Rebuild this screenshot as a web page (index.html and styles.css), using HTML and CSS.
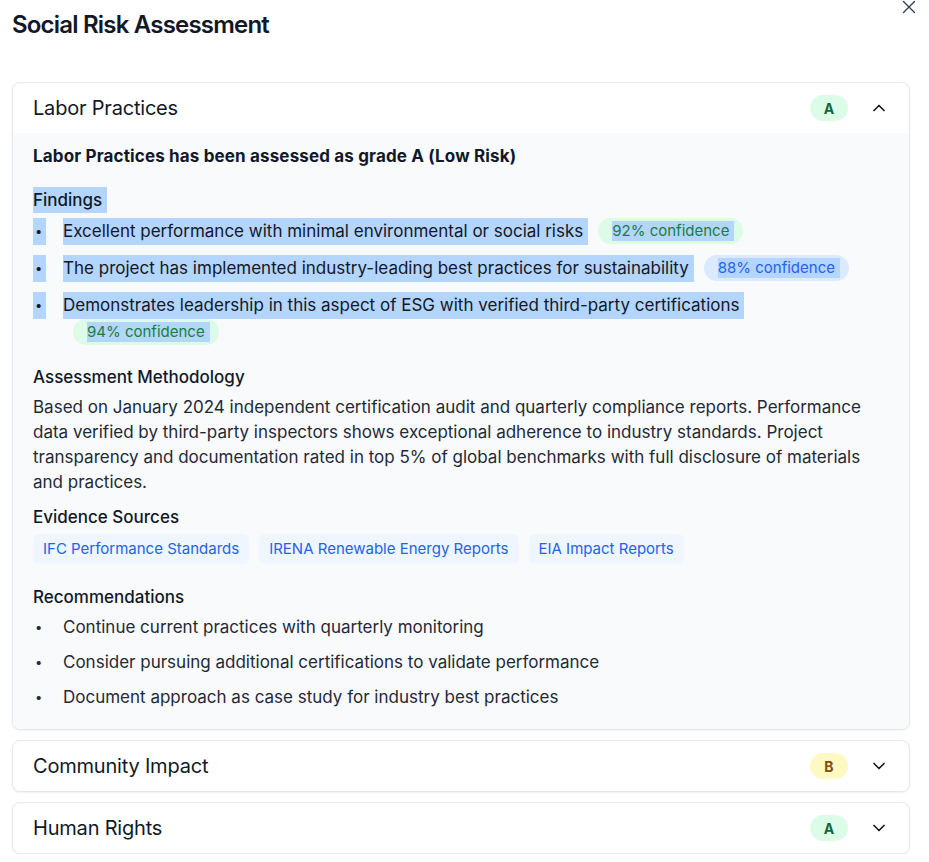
FILE: index.html
```html
<!DOCTYPE html>
<html lang="en">
<head>
<meta charset="utf-8">
<title>Social Risk Assessment</title>
<link rel="stylesheet" href="styles.css">
</head>
<body>
<div class="dialog">
  <button class="close" aria-label="Close">
    <svg width="14" height="14" viewBox="0 0 14 14" fill="none" stroke="#374151" stroke-width="1.4" stroke-linecap="round"><path d="M1.5 1.5l11 11M12.5 1.5l-11 11"/></svg>
  </button>
  <h2 class="title">Social Risk Assessment</h2>

  <div class="accordion">
    <section class="card">
      <div class="card-head">
        <span class="card-title">Labor Practices</span>
        <span class="grade grade-a">A</span>
        <svg class="chev" width="20" height="20" viewBox="0 0 24 24" fill="none" stroke="#111827" stroke-width="2" stroke-linecap="round" stroke-linejoin="round"><path d="m18 15-6-6-6 6"/></svg>
      </div>
      <div class="card-body">
        <p class="summary">Labor Practices has been assessed as grade A (Low Risk)</p>

        <h3 class="label findings-label"><span class="sel sel-label">Findings</span></h3>
        <ul class="findings">
          <li class="finding">
            <span class="bullet sel">•</span>
            <span class="finding-text"><span class="sel sel-text">Excellent performance with minimal environmental or social risks</span><span class="conf conf-green"><span class="sel sel-conf">92% confidence</span></span></span>
          </li>
          <li class="finding">
            <span class="bullet sel">•</span>
            <span class="finding-text"><span class="sel sel-text">The project has implemented industry-leading best practices for sustainability</span><span class="conf conf-blue"><span class="sel sel-conf">88% confidence</span></span></span>
          </li>
          <li class="finding">
            <span class="bullet sel">•</span>
            <span class="finding-text"><span class="sel sel-text">Demonstrates leadership in this aspect of ESG with verified third-party certifications</span><span class="conf conf-green"><span class="sel sel-conf">94% confidence</span></span></span>
          </li>
        </ul>

        <h3 class="label method-label">Assessment Methodology</h3>
        <p class="method">Based on January 2024 independent certification audit and quarterly compliance reports. Performance data verified by third-party inspectors shows exceptional adherence to industry standards. Project transparency and documentation rated in top 5% of global benchmarks with full disclosure of materials and practices.</p>

        <h3 class="label evidence-label">Evidence Sources</h3>
        <div class="chips">
          <span class="chip">IFC Performance Standards</span>
          <span class="chip">IRENA Renewable Energy Reports</span>
          <span class="chip">EIA Impact Reports</span>
        </div>

        <h3 class="label rec-label">Recommendations</h3>
        <ul class="recs">
          <li class="rec"><span class="bullet">•</span><span>Continue current practices with quarterly monitoring</span></li>
          <li class="rec"><span class="bullet">•</span><span>Consider pursuing additional certifications to validate performance</span></li>
          <li class="rec"><span class="bullet">•</span><span>Document approach as case study for industry best practices</span></li>
        </ul>
      </div>
    </section>

    <section class="card">
      <div class="card-head">
        <span class="card-title">Community Impact</span>
        <span class="grade grade-b">B</span>
        <svg class="chev" width="20" height="20" viewBox="0 0 24 24" fill="none" stroke="#111827" stroke-width="2" stroke-linecap="round" stroke-linejoin="round"><path d="m6 9 6 6 6-6"/></svg>
      </div>
    </section>

    <section class="card">
      <div class="card-head">
        <span class="card-title">Human Rights</span>
        <span class="grade grade-a">A</span>
        <svg class="chev" width="20" height="20" viewBox="0 0 24 24" fill="none" stroke="#111827" stroke-width="2" stroke-linecap="round" stroke-linejoin="round"><path d="m6 9 6 6 6-6"/></svg>
      </div>
    </section>
  </div>
</div>
</body>
</html>
```

FILE: styles.css
```css
* { box-sizing: border-box; }

body {
  margin: 0;
  background: #ffffff;
  color: #111827;
  font-family: Inter, "Noto Sans", "Liberation Sans", sans-serif;
}

.dialog {
  position: relative;
  padding: 9px 19px 0 12px;
}

.close {
  position: absolute;
  top: 0;
  left: 902px;
  padding: 0;
  border: 0;
  background: none;
  line-height: 0;
}

.title {
  margin: 0 0 41px;
  font-size: 24px;
  line-height: 32px;
  font-weight: 600;
  letter-spacing: -0.8px;
}

.card {
  border: 1px solid #e5e7eb;
  border-radius: 8px;
  overflow: hidden;
  background: #ffffff;
  box-shadow: 0 1px 2px rgba(0, 0, 0, 0.05);
}

.card + .card {
  margin-top: 10px;
}

.card-head {
  display: flex;
  align-items: center;
  height: 50px;
  padding: 0 20px 0 20px;
}

.card-title {
  flex: 1;
  font-size: 20px;
  line-height: 28px;
  letter-spacing: -0.2px;
}

.grade {
  display: flex;
  align-items: center;
  justify-content: center;
  width: 38px;
  height: 26px;
  border-radius: 13px;
  font-size: 14px;
  font-weight: 700;
}

.grade-a { background: #dcfce7; color: #166534; }
.grade-b { background: #fef9c3; color: #854d0e; }

.chev {
  margin-left: 21px;
}

.card-body {
  background: #f9fafb;
  padding: 11px 20px 20px;
}

.summary {
  margin: 0;
  font-size: 17px;
  line-height: 24px;
  font-weight: 700;
  letter-spacing: 0.15px;
}

.label {
  margin: 0;
  font-size: 17px;
  line-height: 24px;
  font-weight: 500;
}

.sel {
  background: #b4d5fe;
}

.findings-label { margin-top: 20px; }
.sel-label { padding: 3px 5px 3px 0; }

.findings,
.recs {
  list-style: none;
  margin: 0;
  padding: 0;
}

.findings { margin-top: 6px; }

.finding {
  display: flex;
  gap: 17px;
  font-size: 17px;
  line-height: 27px;
  margin-bottom: 10px;
}

.finding:last-child { margin-bottom: 0; }

.bullet {
  flex: none;
  display: inline-block;
  width: 13px;
  padding-left: 2px;
  font-size: 13px;
}

.finding .bullet { height: 27px; }

.finding-text { flex: 1; }

.sel-text {
  display: inline-block;
  padding-right: 5px;
}

.conf {
  display: inline-block;
  vertical-align: top;
  height: 26px;
  margin-left: 10px;
  padding: 3px 9px 3px 14px;
  border-radius: 13px;
  font-size: 15px;
  line-height: 20px;
}

.sel-conf {
  display: inline-block;
  padding-right: 5px;
}

.conf-green { background: #dcfce7; color: #15803d; }
.conf-blue { background: #dbeafe; color: #2563eb; }

.method-label { margin-top: 19px; }

.method {
  margin: 6px 0 0;
  font-size: 17px;
  line-height: 25px;
  color: #1f2937;
}

.evidence-label { margin-top: 10px; }

.chips {
  display: flex;
  flex-wrap: wrap;
  gap: 10px;
  margin-top: 5px;
}

.chip {
  height: 30px;
  padding: 0 10px;
  border-radius: 6px;
  background: #eff6ff;
  color: #2563eb;
  font-size: 15px;
  line-height: 30px;
}

.rec-label { margin-top: 21px; }

.recs { margin-top: 6px; }

.rec {
  display: flex;
  gap: 17px;
  font-size: 17px;
  line-height: 24px;
  margin-bottom: 11px;
  color: #1f2937;
}

.rec:last-child { margin-bottom: 0; }
```
